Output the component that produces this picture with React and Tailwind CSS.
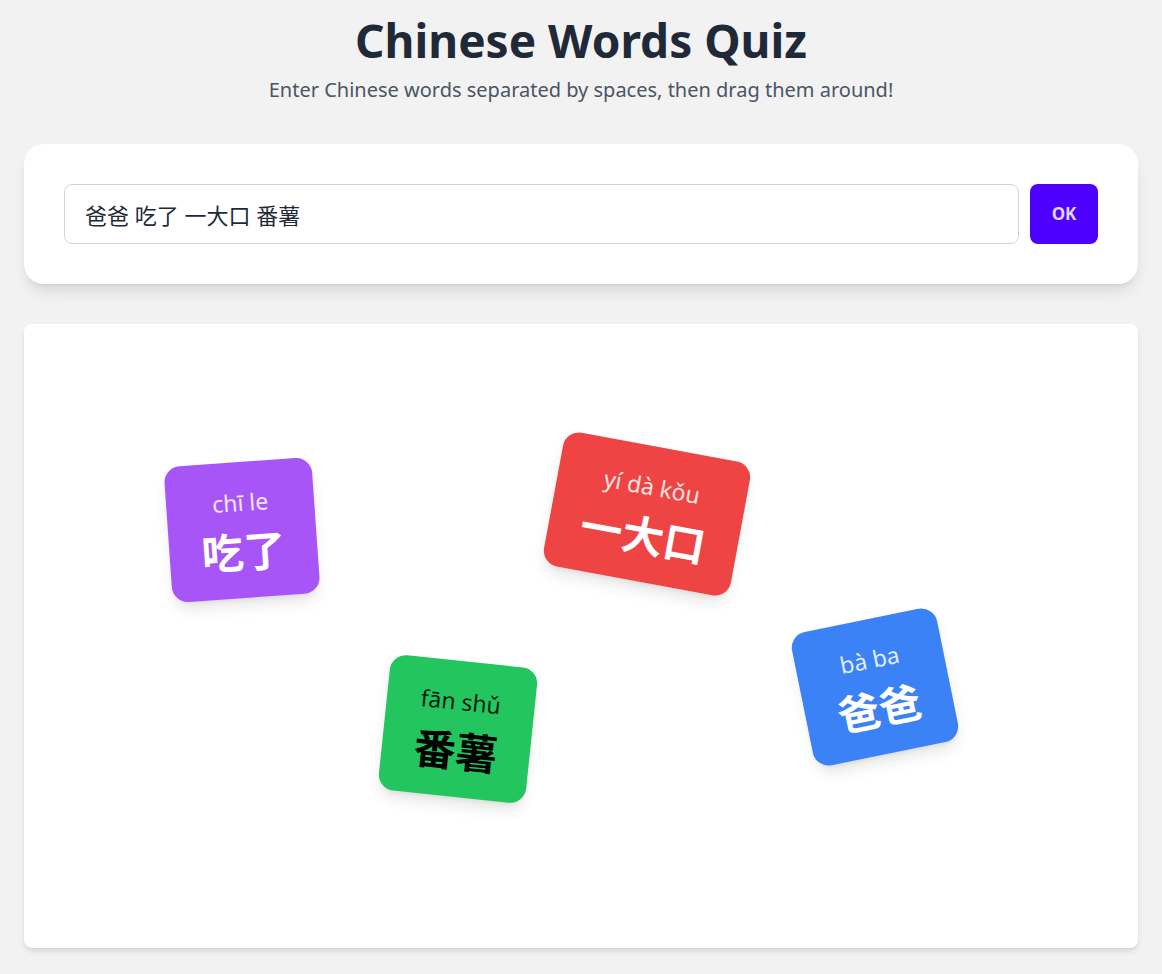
import { useState } from 'react'

const WORDS = [
  { hanzi: '吃了', pinyin: 'chī le', bg: 'bg-[#a855f7]', text: 'text-white', sub: 'text-white/85', pos: 'left-[218px] top-[206px]', rot: '-rotate-[4deg]' },
  { hanzi: '一大口', pinyin: 'yí dà kǒu', bg: 'bg-[#ef4444]', text: 'text-white', sub: 'text-white/85', pos: 'left-[623px] top-[190px]', rot: 'rotate-[10.5deg]' },
  { hanzi: '番薯', pinyin: 'fān shǔ', bg: 'bg-[#22c55e]', text: 'text-black', sub: 'text-black/85', pos: 'left-[434px] top-[405px]', rot: 'rotate-[6deg]' },
  { hanzi: '爸爸', pinyin: 'bà ba', bg: 'bg-[#3b82f6]', text: 'text-white', sub: 'text-white/85', pos: 'left-[851px] top-[363px]', rot: '-rotate-[11.5deg]' },
]

function WordCard({ word }) {
  return (
    <div
      className={`absolute ${word.pos} -translate-x-1/2 -translate-y-1/2 ${word.rot} ${word.bg} rounded-2xl shadow-lg px-8 pt-6 pb-5 flex flex-col items-center cursor-move select-none`}
    >
      <div className={`text-[23px] leading-8 ${word.sub}`}>{word.pinyin}</div>
      <div className={`mt-1 text-[42px] leading-[56px] font-bold ${word.text} font-['Noto_Sans_CJK_SC',sans-serif]`}>
        {word.hanzi}
      </div>
    </div>
  )
}

export default function App() {
  const [input, setInput] = useState('爸爸 吃了 一大口 番薯')

  return (
    <div className="min-h-screen bg-[#f2f2f2] px-6 pt-4 pb-6 font-['Noto_Sans','Noto_Sans_CJK_SC',sans-serif]">
      <h1 className="text-center text-[46px] leading-[48px] font-bold text-[#1f2937]">Chinese Words Quiz</h1>
      <p className="mt-3 text-center text-[20px] leading-7 text-[#4b5563]">
        Enter Chinese words separated by spaces, then drag them around!
      </p>

      <div className="mt-10 bg-white rounded-[20px] shadow-lg p-10 flex items-center gap-[11px]">
        <input
          value={input}
          onChange={(e) => setInput(e.target.value)}
          className="flex-1 h-[60px] border border-[#d1d5db] rounded-lg px-5 text-[22px] text-[#1f2937] outline-none"
        />
        <button className="h-[60px] w-[68px] bg-[#4d00ff] rounded-lg text-[#e0d8ff] font-bold text-[17px]">OK</button>
      </div>

      <div className="mt-10 relative h-[624px] bg-white rounded-lg shadow-md overflow-hidden">
        {WORDS.map((w) => (
          <WordCard key={w.hanzi} word={w} />
        ))}
      </div>
    </div>
  )
}
